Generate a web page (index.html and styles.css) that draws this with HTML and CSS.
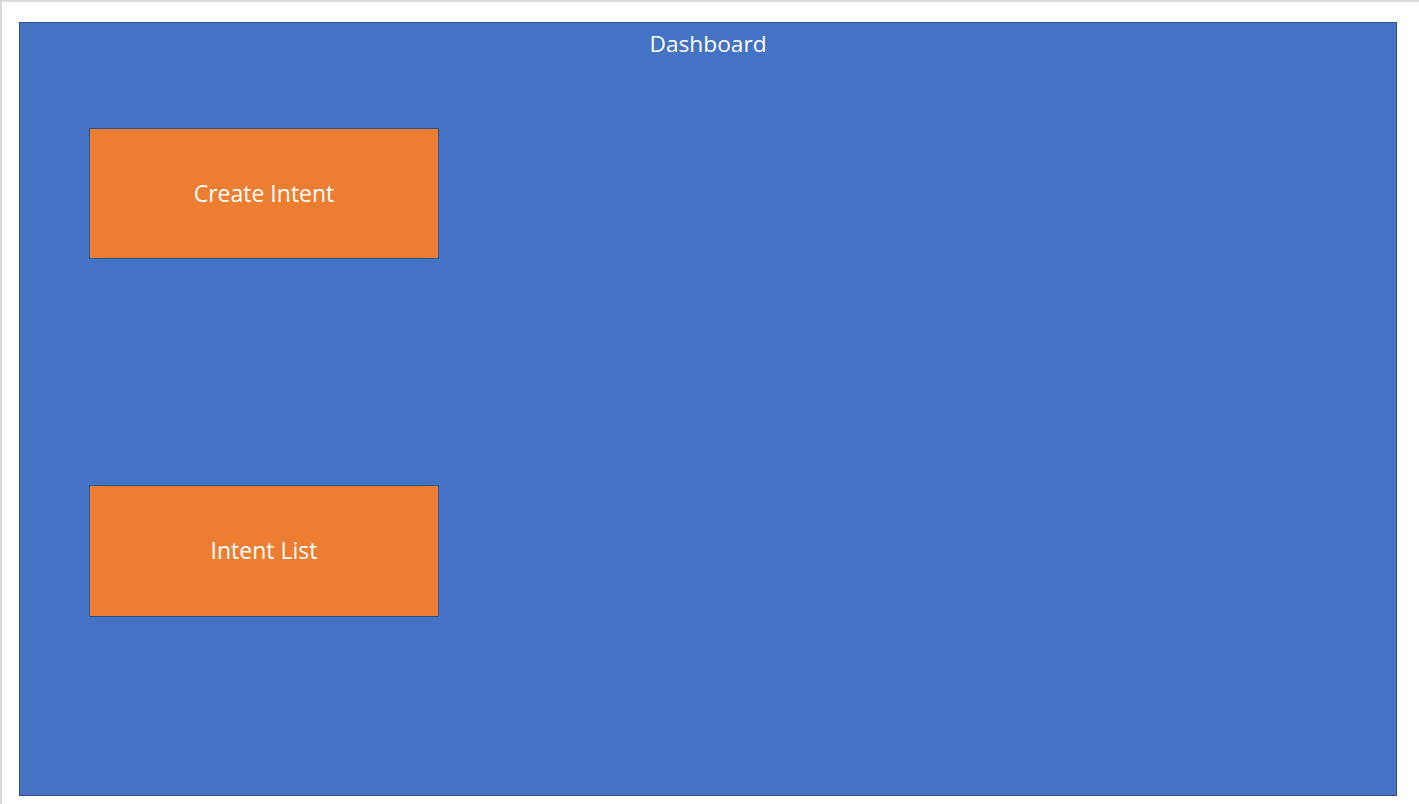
FILE: index.html
```html
<!DOCTYPE html>
<html>
<head>
<meta charset="utf-8">
<title>Dashboard</title>
<link rel="stylesheet" href="styles.css">
</head>
<body>
<div class="frame">
  <div class="board">
    <div class="title">Dashboard</div>
    <div class="tile tile-create">Create Intent</div>
    <div class="tile tile-list">Intent List</div>
  </div>
</div>
</body>
</html>
```
FILE: styles.css
```css
html, body {
  margin: 0;
  padding: 0;
  background: #ffffff;
}
.frame {
  box-sizing: border-box;
  width: 1419px;
  height: 804px;
  border-top: 2px solid #d9d9d9;
  border-left: 2px solid #d9d9d9;
  padding: 20px 0 0 17px;
  font-family: "Open Sans", "Noto Sans", sans-serif;
  color: #ffffff;
}
.board {
  box-sizing: border-box;
  width: 1378px;
  height: 774px;
  background: #4472c4;
  border: 1px solid #2f528f;
  display: flex;
  flex-direction: column;
  padding-left: 69px;
}
.title {
  height: 42px;
  line-height: 42px;
  font-size: 22.7px;
  text-align: center;
  margin-left: -69px;
}
.tile {
  box-sizing: border-box;
  width: 350px;
  background: #ed7d31;
  border: 1px solid #2f528f;
  display: flex;
  align-items: center;
  justify-content: center;
  font-size: 23px;
  padding-bottom: 2px;
}
.tile-create {
  height: 131px;
  margin-top: 63px;
}
.tile-list {
  height: 132px;
  margin-top: 226px;
}
```
